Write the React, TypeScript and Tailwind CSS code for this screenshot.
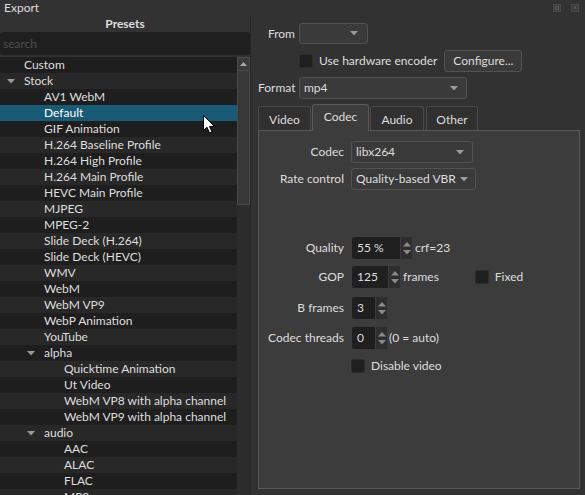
import type { ReactNode } from 'react';

interface PresetRow {
  label: string;
  level: number;
  expandable?: boolean;
  selected?: boolean;
}

const presetRows: PresetRow[] = [
  { label: 'Custom', level: 0 },
  { label: 'Stock', level: 0, expandable: true },
  { label: 'AV1 WebM', level: 1 },
  { label: 'Default', level: 1, selected: true },
  { label: 'GIF Animation', level: 1 },
  { label: 'H.264 Baseline Profile', level: 1 },
  { label: 'H.264 High Profile', level: 1 },
  { label: 'H.264 Main Profile', level: 1 },
  { label: 'HEVC Main Profile', level: 1 },
  { label: 'MJPEG', level: 1 },
  { label: 'MPEG-2', level: 1 },
  { label: 'Slide Deck (H.264)', level: 1 },
  { label: 'Slide Deck (HEVC)', level: 1 },
  { label: 'WMV', level: 1 },
  { label: 'WebM', level: 1 },
  { label: 'WebM VP9', level: 1 },
  { label: 'WebP Animation', level: 1 },
  { label: 'YouTube', level: 1 },
  { label: 'alpha', level: 1, expandable: true },
  { label: 'Quicktime Animation', level: 2 },
  { label: 'Ut Video', level: 2 },
  { label: 'WebM VP8 with alpha channel', level: 2 },
  { label: 'WebM VP9 with alpha channel', level: 2 },
  { label: 'audio', level: 1, expandable: true },
  { label: 'AAC', level: 2 },
  { label: 'ALAC', level: 2 },
  { label: 'FLAC', level: 2 },
  { label: 'MP3', level: 2 },
];

const indentClass = ['pl-[24px]', 'pl-[44px]', 'pl-[64px]'];
const arrowClass = ['left-[7px]', 'left-[27px]', 'left-[47px]'];

function DownArrow({ className = '' }: { className?: string }) {
  return (
    <svg width="8" height="5" viewBox="0 0 8 5" className={className}>
      <path d="M0 0 L8 0 L4 4.5 Z" fill="#9a9a9a" />
    </svg>
  );
}

function ComboBox({ value, width }: { value: string; width: string }) {
  return (
    <div
      className={`flex h-[22px] ${width} items-center justify-between gap-[4px] rounded-[3px] border border-[#525252] bg-[#3a3a3a] pl-[4px] pr-[8px]`}
    >
      <span className="whitespace-nowrap">{value}</span>
      <DownArrow className="shrink-0" />
    </div>
  );
}

function CheckBox() {
  return <div className="h-[14px] w-[14px] rounded-[2px] border border-[#2c2c2c] bg-[#1f1f1f]" />;
}

function SpinBox({ value, width }: { value: string; width: string }) {
  return (
    <div className={`flex h-[24px] ${width} overflow-hidden rounded-[3px] border border-[#3c3c3c] bg-[#1f1f1f]`}>
      <div className="flex flex-1 items-center pl-[5px]">{value}</div>
      <div className="flex w-[12px] flex-col items-center justify-center gap-[3px] border-l border-[#3c3c3c] bg-[#2e2e2e]">
        <svg width="8" height="5" viewBox="0 0 8 5">
          <path d="M0 4.5 L8 4.5 L4 0 Z" fill="#8a8a8a" />
        </svg>
        <svg width="8" height="5" viewBox="0 0 8 5">
          <path d="M0 0 L8 0 L4 4.5 Z" fill="#8a8a8a" />
        </svg>
      </div>
    </div>
  );
}

function FormRow({ label, children, className = '' }: { label: string; children: ReactNode; className?: string }) {
  return (
    <div className={`flex items-center ${className}`}>
      <div className="w-[92px] shrink-0 pr-[7px] text-right">{label}</div>
      {children}
    </div>
  );
}

function Tab({ label, active }: { label: string; active?: boolean }) {
  if (active) {
    return (
      <div className="relative z-10 -mb-px flex h-[27px] w-[57px] items-center justify-center rounded-t-[3px] border border-b-0 border-[#5a5a5a] bg-[#3c3c3c] pb-[2px]">
        {label}
      </div>
    );
  }

  return (
    <div className="mt-[2px] flex h-[24px] items-center justify-center rounded-t-[3px] border border-b-0 border-[#4a4a4a] bg-[#303030] pt-[2px]">
      {label}
    </div>
  );
}

function MouseCursor() {
  return (
    <svg width="13" height="19" viewBox="0 0 13 19" className="absolute left-[203px] top-[115px]">
      <path
        d="M0.5 0.5 L0.5 15.5 L4 12.2 L6.6 18 L9 17 L6.5 11.4 L11.5 11.4 Z"
        fill="#ffffff"
        stroke="#000000"
        strokeWidth="1"
        strokeLinejoin="round"
      />
    </svg>
  );
}

export default function App() {
  return (
    <div
      className="relative flex h-[495px] w-[585px] flex-col overflow-hidden bg-[#323232] text-[12px] leading-[16px] text-[#dedede]"
      style={{ fontFamily: 'Lato, "Liberation Sans", sans-serif' }}
    >
      <div className="flex h-[15px] shrink-0 items-center justify-between pl-[4px] pr-[6px]">
        <span>Export</span>
        <div className="flex gap-[10px]">
          <div className="flex h-[8px] w-[8px] items-center justify-center border border-[#4a4a4a] bg-[#3a3a3a]">
            <div className="h-[4px] w-[4px] border border-[#5a5a5a]" />
          </div>
          <div className="flex h-[8px] w-[8px] items-center justify-center border border-[#4a4a4a] bg-[#3a3a3a] text-[7px] leading-none text-[#6a6a6a]">
            ×
          </div>
        </div>
      </div>

      <div className="flex min-h-0 flex-1">
        <div className="flex w-[250px] shrink-0 flex-col">
          <div className="flex h-[17px] items-center justify-center font-bold">Presets</div>
          <div className="flex h-[23px] items-center rounded-[3px] bg-[#1f1f1f] pl-[3px] text-[#4e4e4e]">search</div>
          <div className="mt-[2px] flex min-h-0 flex-1 overflow-hidden">
            <div className="flex w-[237px] flex-col">
              {presetRows.map((row, index) => (
                <div
                  key={row.label + index}
                  className={`relative flex h-[16px] shrink-0 items-center ${indentClass[row.level]} ${
                    row.selected ? 'bg-[#195b76] text-white' : index % 2 === 0 ? 'bg-[#1e1e1e]' : 'bg-[#282828]'
                  }`}
                >
                  {row.expandable && <DownArrow className={`absolute ${arrowClass[row.level]} top-[6px]`} />}
                  {row.label}
                </div>
              ))}
            </div>
            <div className="flex w-[13px] flex-col bg-[#2c2c2c]">
              <div className="flex h-[14px] items-center justify-center border border-[#4a4a4a] bg-[#3a3a3a]">
                <svg width="7" height="4" viewBox="0 0 7 4">
                  <path d="M0 4 L7 4 L3.5 0 Z" fill="#a8a8a8" />
                </svg>
              </div>
              <div className="h-[134px] border border-t-0 border-[#4a4a4a] bg-[#383838]" />
            </div>
          </div>
        </div>

        <div className="w-[2px] shrink-0 border-l border-[#262626]" />

        <div className="flex min-w-0 flex-1 flex-col pl-[6px] pr-[5px] pt-[8px] pb-[6px]">
          <div className="flex items-center">
            <div className="w-[41px] pr-[4px] text-right">From</div>
            <div className="flex h-[21px] w-[69px] items-center justify-end rounded-[3px] border border-[#525252] bg-[#3a3a3a] pr-[9px]">
              <DownArrow />
            </div>
          </div>

          <div className="mt-[6px] flex items-center">
            <div className="ml-[41px] flex items-center gap-[6px]">
              <CheckBox />
              <span>Use hardware encoder</span>
            </div>
            <div className="ml-[7px] flex h-[22px] w-[78px] items-center justify-center rounded-[3px] border border-[#525252] bg-[#3a3a3a]">
              Configure...
            </div>
          </div>

          <div className="mt-[5px] flex items-center">
            <div className="w-[41px] pr-[4px] text-right">Format</div>
            <ComboBox value="mp4" width="w-[168px]" />
          </div>

          <div className="mt-[5px] flex items-end gap-[1px]">
            <div className="w-[53px]">
              <Tab label="Video" />
            </div>
            <Tab label="Codec" active />
            <div className="w-[54px]">
              <Tab label="Audio" />
            </div>
            <div className="ml-[1px] w-[52px]">
              <Tab label="Other" />
            </div>
          </div>

          <div className="flex flex-1 flex-col border border-[#585858] bg-[#3c3c3c] pt-[10px]">
            <FormRow label="Codec">
              <ComboBox value="libx264" width="w-[122px]" />
            </FormRow>
            <FormRow label="Rate control" className="mt-[5px]">
              <ComboBox value="Quality-based VBR" width="w-[125px]" />
            </FormRow>

            <FormRow label="Quality" className="mt-[46px]">
              <SpinBox value="55 %" width="w-[62px]" />
              <span className="ml-[2px]">crf=23</span>
            </FormRow>
            <FormRow label="GOP" className="mt-[5px]">
              <SpinBox value="125" width="w-[50px]" />
              <span className="ml-[2px]">frames</span>
              <div className="ml-[36px] flex items-center gap-[6px]">
                <CheckBox />
                <span>Fixed</span>
              </div>
            </FormRow>
            <FormRow label="B frames" className="mt-[7px]">
              <SpinBox value="3" width="w-[37px]" />
            </FormRow>
            <FormRow label="Codec threads" className="mt-[6px]">
              <SpinBox value="0" width="w-[37px]" />
              <span className="ml-[1px]">(0 = auto)</span>
            </FormRow>
            <div className="mt-[8px] flex items-center gap-[6px] pl-[92px]">
              <CheckBox />
              <span>Disable video</span>
            </div>
          </div>
        </div>
      </div>

      <MouseCursor />
    </div>
  );
}
